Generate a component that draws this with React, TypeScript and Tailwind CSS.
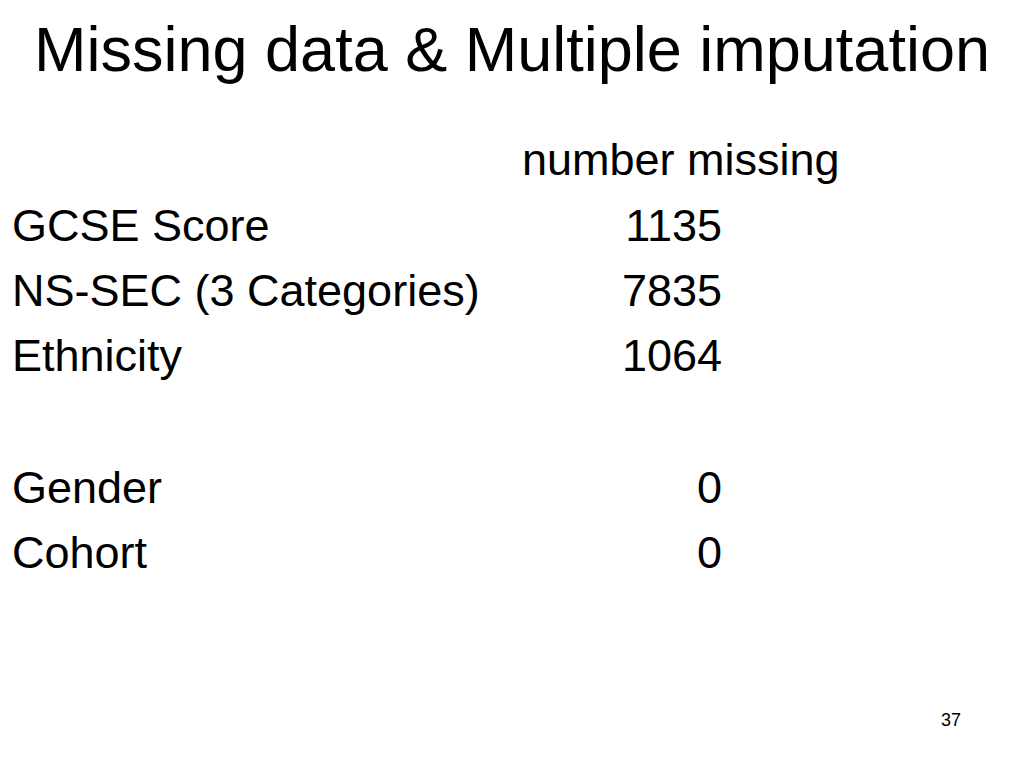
const rows = [
  { label: "GCSE Score", value: "1135" },
  { label: "NS-SEC (3 Categories)", value: "7835" },
  { label: "Ethnicity", value: "1064" },
  { label: "", value: "", gap: true },
  { label: "Gender", value: "0" },
  { label: "Cohort", value: "0" },
];

export default function App() {
  return (
    <div className="flex h-[768px] w-[1024px] flex-col bg-white text-black font-['Liberation_Sans',Arial,sans-serif]">
      <h1 className="pt-[13px] text-center text-[63px] leading-[72px] font-normal whitespace-nowrap">
        Missing data &amp; Multiple imputation
      </h1>

      <div className="mt-[42px] pl-[12px] text-[45px] leading-[65px]">
        <div className="flex h-[66px]">
          <div className="w-[510px]" />
          <div className="whitespace-nowrap">number missing</div>
        </div>
        {rows.map((row, i) => (
          <div key={i} className={row.gap ? "h-[67px]" : "flex h-[65px]"}>
            <div className="w-[510px] whitespace-nowrap">{row.label}</div>
            <div className="w-[200px] text-right">{row.value}</div>
          </div>
        ))}
      </div>

      <div className="mt-auto flex justify-end pr-[63px] pb-[38px] text-[18px] leading-[20px]">
        37
      </div>
    </div>
  );
}
